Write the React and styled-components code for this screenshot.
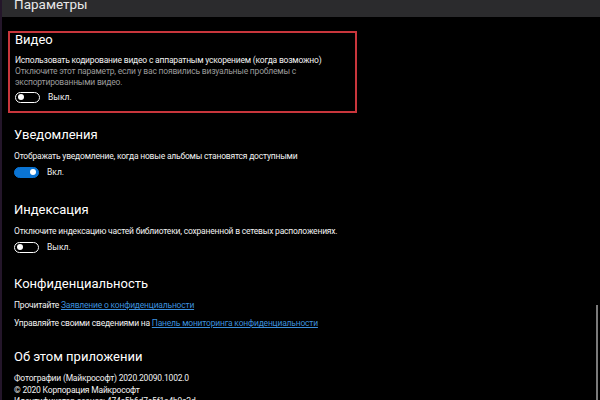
import React from 'react';
import styled, { createGlobalStyle } from 'styled-components';

const Global = createGlobalStyle`
  html, body {
    margin: 0;
    padding: 0;
    background: #000;
  }
  body {
    font-family: "Roboto", "Noto Sans", sans-serif;
    color: #fff;
  }
`;

const Page = styled.div`
  width: 600px;
  height: 400px;
  overflow: hidden;
  position: relative;
  background: #000;
  border-left: 2px solid #24162a;
  box-sizing: border-box;
`;

const TopBar = styled.div`
  height: 17px;
  overflow: hidden;
  background: #2b2b2d;
  padding-left: 12px;
`;

const TopTitle = styled.div`
  font-size: 13.5px;
  line-height: 13px;
  margin-top: -2px;
  color: #e8e8e8;
`;

const Content = styled.div`
  padding: 14px 0 0 12px;
  display: flex;
  flex-direction: column;
`;

const Section = styled.div`
  display: flex;
  flex-direction: column;
  width: ${(p) => (p.$boxed ? '335px' : 'auto')};
  margin-left: ${(p) => (p.$boxed ? '-6px' : '0')};
  padding: ${(p) => (p.$boxed ? '0 5px 7px 5px' : '0')};
  border: ${(p) => (p.$boxed ? '2px solid #c9363c' : 'none')};
  margin-bottom: ${(p) => p.$gap || 0}px;
`;

const Title = styled.div`
  font-size: 13px;
  line-height: 14px;
  color: #fff;
  margin-bottom: ${(p) => p.$mb ?? 9}px;
`;

const Line = styled.div`
  font-size: 8.5px;
  letter-spacing: -0.2px;
  line-height: ${(p) => p.$lh || 11}px;
  color: ${(p) => (p.$muted ? '#9b9b9b' : '#f2f2f2')};
  margin-bottom: ${(p) => p.$gap || 0}px;
  white-space: nowrap;
`;

const Link = styled.a`
  color: #3c8fdc;
  text-decoration: underline;
  cursor: pointer;
`;

const ToggleRow = styled.div`
  display: flex;
  align-items: center;
  gap: 8px;
  margin-top: ${(p) => p.$mt}px;
  height: 14px;
`;

const Track = styled.div`
  width: 25px;
  height: 11px;
  box-sizing: border-box;
  border-radius: 6px;
  border: 1.5px solid ${(p) => (p.$on ? '#0a74d4' : '#fff')};
  background: ${(p) => (p.$on ? '#0a74d4' : 'transparent')};
  display: flex;
  align-items: center;
  justify-content: ${(p) => (p.$on ? 'flex-end' : 'flex-start')};
  padding: 0 2px;
`;

const Knob = styled.div`
  width: 6px;
  height: 6px;
  border-radius: 50%;
  background: #fff;
`;

const ToggleLabel = styled.span`
  font-size: 8.5px;
  color: #f2f2f2;
`;

const ScrollBar = styled.div`
  position: absolute;
  right: 2px;
  top: 305px;
  width: 2px;
  height: 100px;
  background: #7a7a7a;
`;

function Toggle({ on, mt = 3 }) {
  return (
    <ToggleRow $mt={mt}>
      <Track $on={on}>
        <Knob />
      </Track>
      <ToggleLabel>{on ? 'Вкл.' : 'Выкл.'}</ToggleLabel>
    </ToggleRow>
  );
}

export default function App() {
  return (
    <>
      <Global />
      <Page>
        <TopBar>
          <TopTitle>Параметры</TopTitle>
        </TopBar>
        <Content>
          <Section $boxed $gap={15}>
            <Title $mb={8}>Видео</Title>
            <Line>Использовать кодирование видео с аппаратным ускорением (когда возможно)</Line>
            <Line $muted>Отключите этот параметр, если у вас появились визуальные проблемы с</Line>
            <Line $muted>экспортированными видео.</Line>
            <Toggle on={false} mt={2} />
          </Section>
          <Section $gap={24}>
            <Title>Уведомления</Title>
            <Line>Отображать уведомление, когда новые альбомы становятся доступными</Line>
            <Toggle on />
          </Section>
          <Section $gap={23}>
            <Title>Индексация</Title>
            <Line>Отключите индексацию частей библиотеки, сохраненной в сетевых расположениях.</Line>
            <Toggle on={false} />
          </Section>
          <Section $gap={21}>
            <Title>Конфиденциальность</Title>
            <Line $gap={7}>
              Прочитайте <Link>Заявление о конфиденциальности</Link>
            </Line>
            <Line>
              Управляйте своими сведениями на <Link>Панель мониторинга конфиденциальности</Link>
            </Line>
          </Section>
          <Section>
            <Title>Об этом приложении</Title>
            <Line $lh={11.5}>Фотографии (Майкрософт) 2020.20090.1002.0</Line>
            <Line $lh={11.5}>© 2020 Корпорация Майкрософт</Line>
            <Line $lh={11.5}>Идентификатор сеанса: 474c5b6d7e5f1a4b9c2d</Line>
          </Section>
        </Content>
        <ScrollBar />
      </Page>
    </>
  );
}
